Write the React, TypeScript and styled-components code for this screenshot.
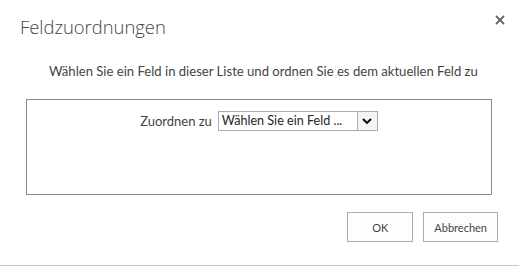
import React from 'react';
import styled, { createGlobalStyle } from 'styled-components';

const Global = createGlobalStyle`
  html, body { margin: 0; padding: 0; background: #fff; }
  body { font-family: Lato, "Liberation Sans", sans-serif; color: #444; }
`;

const Dialog = styled.div`
  width: 519px;
  height: 266px;
  box-sizing: border-box;
  border-bottom: 1px solid #c6c6c6;
  display: flex;
  flex-direction: column;
`;

const Header = styled.div`
  display: flex;
  justify-content: space-between;
  align-items: flex-start;
  padding: 0 14px 0 20px;
  height: 52px;
`;

const Title = styled.h1`
  margin: 14px 0 0;
  font-family: "Open Sans", sans-serif;
  font-weight: 300;
  font-size: 18.4px;
  line-height: 26px;
  color: #444;
`;

const Close = styled.button`
  margin-top: 15px;
  width: 10px;
  height: 10px;
  padding: 0;
  border: 0;
  background: none;
  display: flex;
  cursor: pointer;
`;

const Description = styled.p`
  margin: 10px 0 0 49px;
  font-size: 13.1px;
  line-height: 18px;
  color: #444;
`;

const Panel = styled.div`
  box-sizing: border-box;
  margin: 19px 0 0 26px;
  width: 466px;
  height: 96px;
  border: 1px solid #8a8a8a;
  padding-top: 11px;
  display: flex;
  justify-content: center;
  align-items: flex-start;
`;

const Row = styled.div`
  display: flex;
  align-items: center;
  gap: 6px;
`;

const Label = styled.label`
  font-size: 13px;
  color: #444;
`;

const Select = styled.div`
  box-sizing: border-box;
  width: 160px;
  height: 20px;
  border: 1px solid #ababab;
  display: flex;
  align-items: stretch;
  background: #fff;
`;

const SelectText = styled.span`
  flex: 1;
  font-size: 12.6px;
  line-height: 18px;
  padding-left: 3px;
  color: #262626;
  white-space: nowrap;
  overflow: hidden;
`;

const Arrow = styled.span`
  box-sizing: border-box;
  width: 20px;
  border-left: 1px solid #ababab;
  background: #f4f4f4;
  display: flex;
  align-items: center;
  justify-content: center;
`;

const Footer = styled.div`
  display: flex;
  justify-content: flex-end;
  gap: 10px;
  padding-right: 21px;
  margin-top: 17px;
`;

const Button = styled.button`
  box-sizing: border-box;
  min-width: 66px;
  height: 30px;
  padding: 0 10px;
  border: 1px solid #ababab;
  background: #fdfdfd;
  font-family: Lato, "Liberation Sans", sans-serif;
  font-size: 11px;
  color: #444;
  cursor: pointer;
`;

export default function App() {
  return (
    <>
      <Global />
      <Dialog>
        <Header>
          <Title>Feldzuordnungen</Title>
          <Close aria-label="Schließen">
            <svg width="10" height="10" viewBox="0 0 10 10">
              <path d="M1 1L9 9M9 1L1 9" stroke="#666" strokeWidth="1.8" />
            </svg>
          </Close>
        </Header>
        <Description>
          Wählen Sie ein Feld in dieser Liste und ordnen Sie es dem aktuellen Feld zu
        </Description>
        <Panel>
          <Row>
            <Label>Zuordnen zu</Label>
            <Select>
              <SelectText>Wählen Sie ein Feld ...</SelectText>
              <Arrow>
                <svg width="10" height="7" viewBox="0 0 10 7">
                  <path d="M1 1L5 5L9 1" fill="none" stroke="#000" strokeWidth="1.9" />
                </svg>
              </Arrow>
            </Select>
          </Row>
        </Panel>
        <Footer>
          <Button>OK</Button>
          <Button>Abbrechen</Button>
        </Footer>
      </Dialog>
    </>
  );
}
